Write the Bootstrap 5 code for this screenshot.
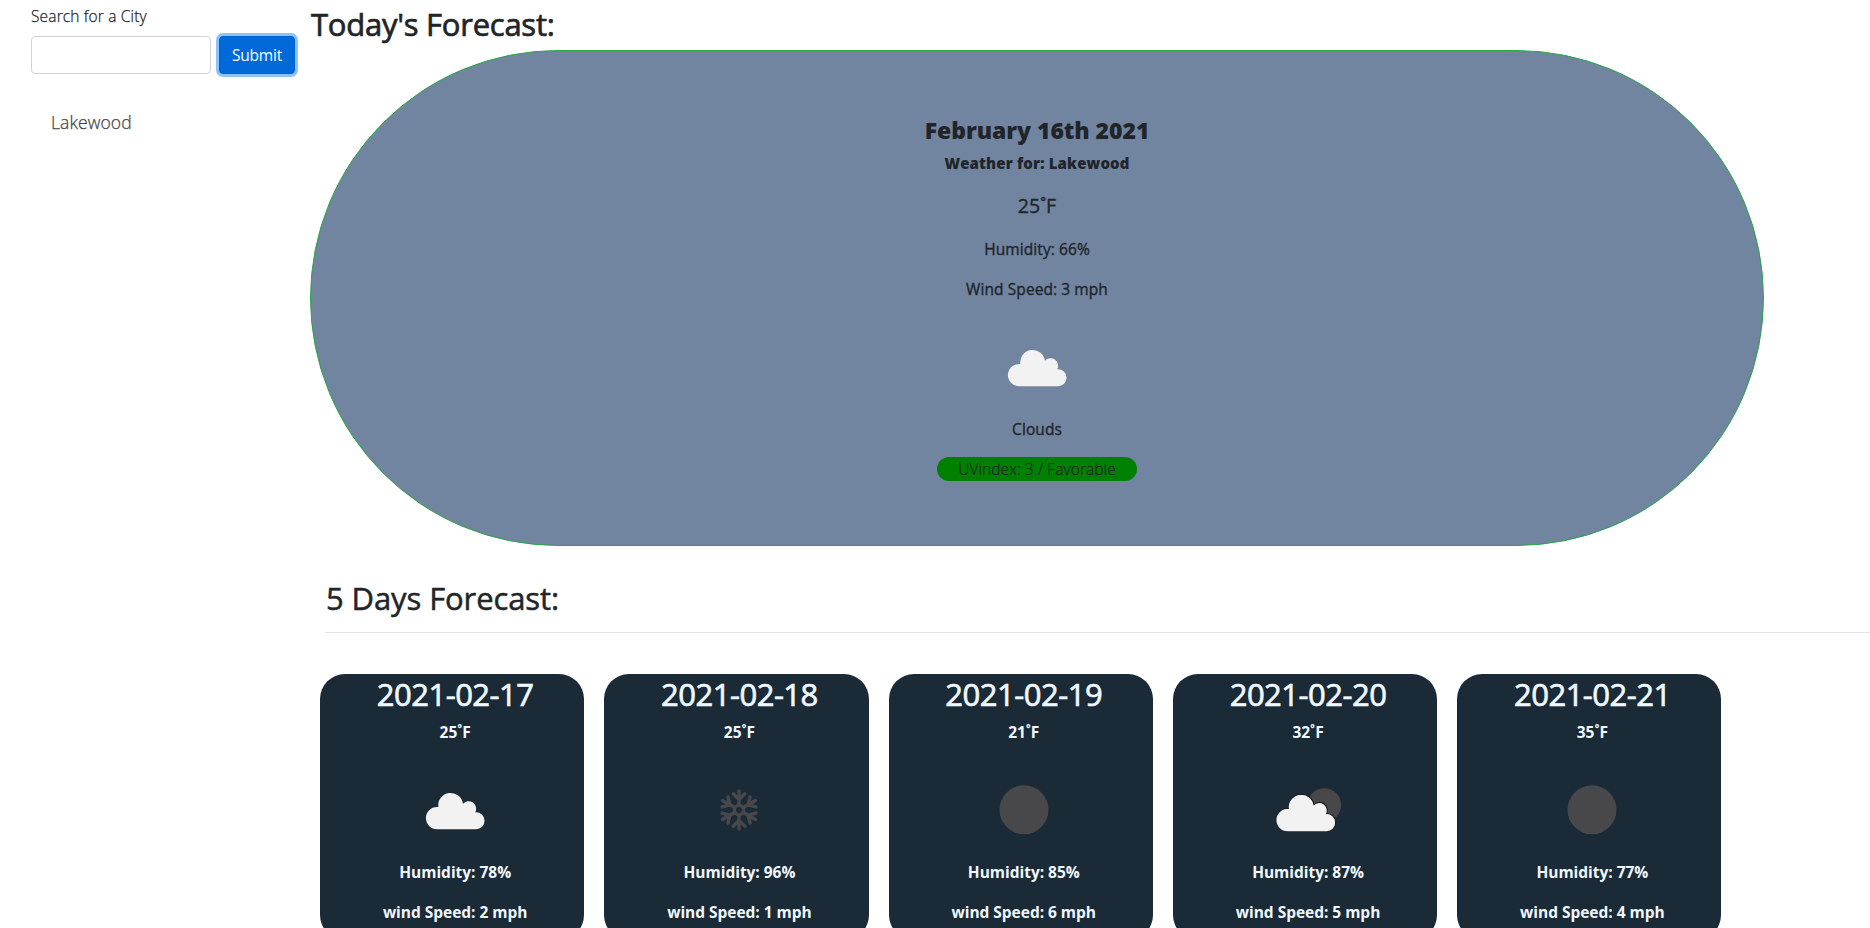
<!DOCTYPE html>
<html lang="en">
<head>
<meta charset="utf-8">
<meta name="viewport" content="width=device-width, initial-scale=1">
<title>Weather Dashboard</title>
<link rel="stylesheet" href="https://cdn.jsdelivr.net/npm/bootstrap@5.3.0/dist/css/bootstrap.min.css">
<style>
body{font-family:"Open Sans","Noto Sans",sans-serif;color:#212529;height:100vh;overflow:hidden;background:#fff}
.side{width:310px;flex:none;padding:4px 0 0 31px}
.city-label{font-weight:300;line-height:24px;font-size:15.5px;letter-spacing:.15px;margin-bottom:8px;-webkit-text-stroke:.25px}
.city-input{width:180px;height:38px;border-color:#ced4da;border-radius:4px}
.btn-search{width:76px;height:38px;padding:2px 0 0;border:1px solid #0062cc;border-radius:4px;background:#0069d9;color:#fff;font-size:15.5px;letter-spacing:-.2px;box-shadow:0 0 0 3px rgba(0,123,255,.45)}
.history{padding:35px 0 0 20px;font-weight:300;font-size:17.5px;letter-spacing:.1px;line-height:27px;color:#444;-webkit-text-stroke:.25px}
.title{font-weight:400;font-size:31px;line-height:38.4px;letter-spacing:-.25px;margin:0;-webkit-text-stroke:.7px}
.title-today{padding:5px 0 0 1px;height:50px}
.today{width:1454px;height:496px;border:1px solid #28a745;border-radius:250px;background:#7184a0;padding-top:65px}
.today p,.day p{font-size:15.5px;line-height:24px;margin:0 0 16px}
.today p{-webkit-text-stroke:.35px;letter-spacing:.08px}
.today-date{font-weight:800;font-size:23px;line-height:28.8px;margin:0 0 9px;letter-spacing:-.05px}
.today-city{font-weight:800;font-size:15px;line-height:19.2px;margin:0 0 18px;letter-spacing:.15px}
.today .today-temp{font-size:19.5px;line-height:30px}
.wicon{display:block;width:100px;height:100px;margin:0 auto}
.today .wicon{position:relative;top:-.5px}
.today .uv{width:200px;height:24px;border-radius:12px;background:green;font-weight:300;margin:0 auto;-webkit-text-stroke:.2px}
.five{padding:33px 0 0 15px}
.five .title{padding-left:1px;letter-spacing:-.1px;-webkit-text-stroke:.5px}
.rule{height:1px;background:#e3e3e4;margin-top:15px}
.days{gap:20px;padding:31px 0 0 10px}
.days{padding-top:41px}
.day{width:264.3px;height:266px;flex:none;border-radius:25px;background:#1b2a37;color:#f0f8ff;padding-left:6px}
.day p{font-weight:700;letter-spacing:-.03px}
.day-date{font-weight:400;font-size:31px;line-height:38.4px;letter-spacing:-.5px;margin:0;padding:1px 0 6px;-webkit-text-stroke:.7px}
</style>
</head>
<body>
<svg class="d-none" xmlns="http://www.w3.org/2000/svg">
  <symbol id="cloud" viewBox="0 0 100 100">
    <path fill="#f2f2f3" d="M32 69.200a11.100 11.100 0 0 1 0-22.200h1.300a12.400 12.400 0 1 1 24.700-3.200a7.500 7.500 0 0 1 12.300 8.400h.8a8.500 8.500 0 0 1 0 17z"/>
  </symbol>
  <symbol id="moon" viewBox="0 0 100 100"><circle cx="50" cy="49.800" r="24.500" fill="#48484a"/></symbol>
  <symbol id="moon-cloud" viewBox="0 0 100 100">
    <circle cx="66.300" cy="45" r="16.800" fill="#48484a"/>
    <use href="#cloud" x="-2" y="1.400" width="100" height="100" stroke="#1b1b1d" stroke-width="1.400"/>
    <use href="#cloud" x="-2.500" y="2" width="100" height="100"/>
  </symbol>
  <symbol id="snow" viewBox="-50 -50 100 100">
    <g fill="none" stroke="#48484a" stroke-width="3.400" stroke-linecap="round" stroke-linejoin="round">
      <circle r="4.600"/>
      <path id="arm" d="M0-5V-19M-5.800-16.200L0-10.400L5.800-16.200"/>
      <use href="#arm" transform="rotate(60)"/><use href="#arm" transform="rotate(120)"/>
      <use href="#arm" transform="rotate(180)"/><use href="#arm" transform="rotate(240)"/>
      <use href="#arm" transform="rotate(300)"/>
    </g>
  </symbol>
</svg>
<div class="d-flex">
  <aside class="side">
    <div class="city-label">Search for a City</div>
    <div class="d-flex gap-2">
      <input class="form-control city-input" type="text" aria-label="City">
      <button class="btn btn-search" type="button">Submit</button>
    </div>
    <div class="history">Lakewood</div>
  </aside>
  <main class="flex-grow-1">
    <h2 class="title title-today">Today's Forecast:</h2>
    <section class="today text-center">
      <h4 class="today-date">February 16th 2021</h4>
      <h6 class="today-city">Weather for: Lakewood</h6>
      <p class="today-temp">25˚F</p>
      <p>Humidity: 66%</p>
      <p>Wind Speed: 3 mph</p>
      <svg class="wicon"><use href="#cloud"/></svg>
      <p>Clouds</p>
      <p class="uv">UVindex: 3 / Favorable</p>
    </section>
    <section class="five">
      <h2 class="title">5 Days Forecast:</h2>
      <div class="rule"></div>
    </section>
    <section class="days d-flex text-center">
      <div class="day"><h2 class="day-date">2021-02-17</h2><p>25˚F</p><svg class="wicon"><use href="#cloud"/></svg><p>Humidity: 78%</p><p>wind Speed: 2 mph</p></div>
      <div class="day"><h2 class="day-date">2021-02-18</h2><p>25˚F</p><svg class="wicon"><use href="#snow"/></svg><p>Humidity: 96%</p><p>wind Speed: 1 mph</p></div>
      <div class="day"><h2 class="day-date">2021-02-19</h2><p>21˚F</p><svg class="wicon"><use href="#moon"/></svg><p>Humidity: 85%</p><p>wind Speed: 6 mph</p></div>
      <div class="day"><h2 class="day-date">2021-02-20</h2><p>32˚F</p><svg class="wicon"><use href="#moon-cloud"/></svg><p>Humidity: 87%</p><p>wind Speed: 5 mph</p></div>
      <div class="day"><h2 class="day-date">2021-02-21</h2><p>35˚F</p><svg class="wicon"><use href="#moon"/></svg><p>Humidity: 77%</p><p>wind Speed: 4 mph</p></div>
    </section>
  </main>
</div>
<script src="https://cdn.jsdelivr.net/npm/bootstrap@5.3.0/dist/js/bootstrap.bundle.min.js"></script>
</body>
</html>
